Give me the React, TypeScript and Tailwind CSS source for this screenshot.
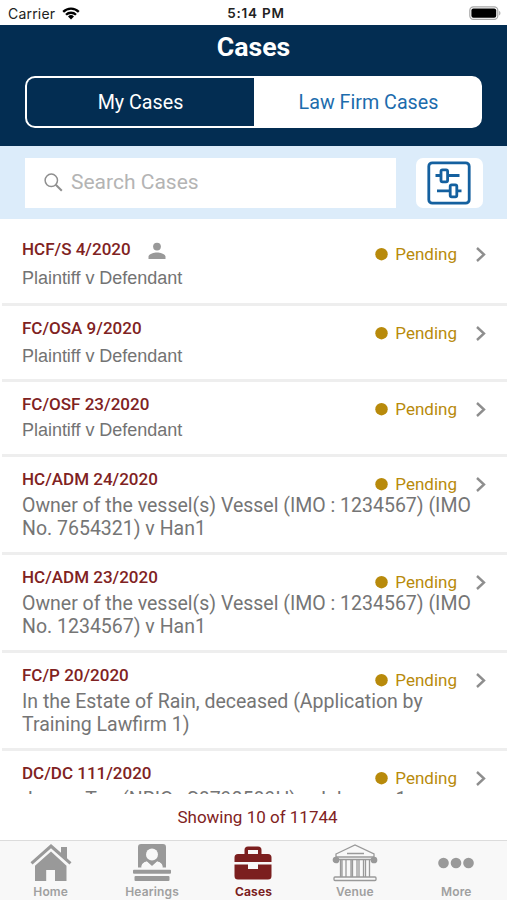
import { useState } from 'react';

type CaseItem = {
  id: string;
  parties: string[];
  status: string;
  own?: boolean;
  row: string;
  partiesClass: string;
};

const COMPACT = "font-['Liberation_Sans',Arial,sans-serif] text-[18px] leading-[24px] tracking-[-0.03px] text-[#737373]";
const REGULAR = 'mt-[3px] w-0 text-[19.5px] leading-[22.7px] text-[#757575]';

const CASES: CaseItem[] = [
  { id: 'HCF/S 4/2020', parties: ['Plaintiff v Defendant'], status: 'Pending', own: true, row: 'h-[87px] pt-[18px]', partiesClass: `mt-[4px] ${COMPACT}` },
  { id: 'FC/OSA 9/2020', parties: ['Plaintiff v Defendant'], status: 'Pending', row: 'h-[76px] pt-[10px]', partiesClass: `mt-[3px] ${COMPACT}` },
  { id: 'FC/OSF 23/2020', parties: ['Plaintiff v Defendant'], status: 'Pending', row: 'h-[75px] pt-[10px]', partiesClass: `mt-[1px] ${COMPACT}` },
  { id: 'HC/ADM 24/2020', parties: ['Owner of the vessel(s) Vessel (IMO : 1234567) (IMO', 'No. 7654321) v Han1'], status: 'Pending', row: 'h-[98px] pt-[10px]', partiesClass: REGULAR },
  { id: 'HC/ADM 23/2020', parties: ['Owner of the vessel(s) Vessel (IMO : 1234567) (IMO', 'No. 1234567) v Han1'], status: 'Pending', row: 'h-[98px] pt-[10px]', partiesClass: REGULAR },
  { id: 'FC/P 20/2020', parties: ['In the Estate of Rain, deceased (Application by', 'Training Lawfirm 1)'], status: 'Pending', row: 'h-[98px] pt-[10px]', partiesClass: REGULAR },
  { id: 'DC/DC 111/2020', parties: ['James Tan (NRIC : S8790589H) v Johnson 1'], status: 'Pending', row: 'h-[98px] pt-[10px]', partiesClass: REGULAR },
];

function StatusBar() {
  return (
    <div className="grid h-[25px] shrink-0 grid-cols-3 items-center bg-white pt-[2px] pr-[6px] pl-2 font-['Inter','Liberation_Sans',sans-serif] text-[#222]">
      <div className="flex items-center gap-[7px] text-[14px] tracking-[0.2px]">
        <span>Carrier</span>
        <svg width="18" height="13" viewBox="0 0 18 13" fill="none" stroke="#000" strokeWidth="2.3">
          <path d="M1.2 4.9a11 11 0 0 1 15.6 0" />
          <path d="M4 7.8a7.1 7.1 0 0 1 10 0" />
          <path d="M9 12.4 6 9.5a4.3 4.3 0 0 1 6 0Z" fill="#000" stroke="none" />
        </svg>
      </div>
      <span className="pl-[3px] text-center text-[13.5px] font-semibold tracking-[0.8px] whitespace-nowrap">5:14 PM</span>
      <svg className="justify-self-end" width="32" height="15" viewBox="0 0 32 15">
        <rect x="0.8" y="0.8" width="28" height="12.6" rx="3.6" fill="#fff" stroke="#a8a8a8" strokeWidth="1.2" />
        <rect x="2.4" y="2.4" width="24.8" height="9.4" rx="2" fill="#000" />
        <path d="M30.2 5v4.4c1.6-.6 1.6-3.8 0-4.4Z" fill="#a8a8a8" />
      </svg>
    </div>
  );
}

function FilterIcon() {
  return (
    <svg className="mr-px" width="44" height="44" viewBox="0 0 44 44" fill="none" stroke="#14609f" strokeWidth="2.8">
      <rect x="1.8" y="1.8" width="40.4" height="40.4" rx="3.5" />
      <path d="M8.5 14.5H14M21 14.5h11.5" />
      <rect x="14" y="8.8" width="6.6" height="12" rx="1.5" />
      <path d="M10 29.8h13M30 29.8h4.5" />
      <rect x="23.2" y="23.8" width="6.6" height="12" rx="1.5" />
    </svg>
  );
}

function PersonIcon() {
  return (
    <svg className="mt-[3px]" width="18" height="18" viewBox="0 0 18 18" fill="#999">
      <circle cx="9" cy="4.6" r="3.9" />
      <path d="M.5 17v-2.2C.5 12 5.5 10.5 9 10.5s8.5 1.5 8.5 4.3V17Z" />
    </svg>
  );
}

function CaseRow({ item }: { item: CaseItem }) {
  return (
    <li className={`ml-[2px] flex shrink-0 justify-between border-b-[3.5px] border-[#eee] pl-[20px] ${item.row}`}>
      <div className="whitespace-nowrap">
        <div className="flex h-[25px] items-center gap-[17px]">
          <h2 className="text-[17px] leading-[25px] font-medium text-[#7f2222]">{item.id}</h2>
          {item.own && <PersonIcon />}
        </div>
        <div className={item.partiesClass}>
          {item.parties.map((line) => (
            <p key={line}>{line}</p>
          ))}
        </div>
      </div>
      <div className="mt-[5px] mr-[20px] flex h-[25px] shrink-0 items-center text-[#b88a0b]">
        <svg className="mr-[7px]" width="13" height="13" viewBox="0 0 13 13" fill="#b88a0b">
          <circle cx="6.5" cy="6.2" r="6.2" />
        </svg>
        <span className="text-[17px] leading-[25px]">{item.status}</span>
        <svg className="ml-[18px]" width="12" height="16" viewBox="0 0 12 16" fill="none" stroke="#8e8e8e" strokeWidth="2.4">
          <path d="m2 1 7 6.5L2 14" />
        </svg>
      </div>
    </li>
  );
}

function HomeIcon() {
  return (
    <svg width="42" height="38" viewBox="0 0 42 38" fill="#999">
      <path d="M21 0 .5 18.2l2 2.3L21 4.300l18.500 16.200 2-2.300-4.500-4V3h-6v5.800Z" />
      <path d="M21 7.5 5 21.7V37h11.200V26h8.800v11h11.500V21.700Z" />
    </svg>
  );
}

function HearingsIcon() {
  return (
    <svg width="40" height="38" viewBox="0 0 40 38" fill="#999">
      <path d="M9 0h22a3 3 0 0 1 3 3v20.500h-3.500v-1c0-2.500-2-4-5-5l-5.500 5-5.500-5c-3 1-5 2.500-5 5v1H6V3a3 3 0 0 1 3-3Z" />
      <path d="M9.500 23.500c0-3.500 2-5.500 5.500-6l5 4.500 5-4.500c3.500.5 5.500 2.500 5.500 6Z" fill="#f8f8f8" />
      <circle cx="20" cy="10.5" r="6" fill="#f8f8f8" />
      <rect x="1" y="25.8" width="38" height="4" rx="1" />
      <rect x="2.5" y="32" width="35" height="5" rx="1" />
    </svg>
  );
}

function BriefcaseIcon() {
  return (
    <svg width="38" height="34" viewBox="0 0 38 34" fill="#7b1f1f">
      <path d="M10.5 8V4A3.5 3.5 0 0 1 14 .5h10A3.5 3.5 0 0 1 27.5 4v4H34a3.5 3.5 0 0 1 3.500 3.500V16H.5v-4.500A3.500 3.500 0 0 1 4 8Zm3.500 0h10V4H14Z" />
      <path d="M.5 18.500H14V23h10v-4.500h13.500V30a3.500 3.500 0 0 1-3.500 3.500H4A3.500 3.500 0 0 1 .5 30Z" />
    </svg>
  );
}

function VenueIcon() {
  return (
    <svg width="46" height="38" viewBox="0 0 46 38" fill="none" stroke="#999" strokeWidth="1.3">
      <path d="M4 10 23 1l19 9v3H4ZM15 9.5h17" />
      <circle cx="4" cy="16" r="2.7" fill="#999" />
      <circle cx="42" cy="16" r="2.7" fill="#999" />
      <path d="M6 15.5h34" />
      <path d="M8.500 16v17M10 16v17M14 16v17M19 16v17M20.500 16v17M25 16v17M27 16v17M31.500 16v17M33.500 16v17M37.500 16v17" />
      <rect x="2" y="33" width="42" height="3.5" rx="1" />
    </svg>
  );
}

function MoreIcon() {
  return (
    <svg width="36" height="12" viewBox="0 0 36 12" fill="#999">
      <circle cx="5.5" cy="6" r="5.3" />
      <circle cx="18" cy="6" r="5.3" />
      <circle cx="30.5" cy="6" r="5.3" />
    </svg>
  );
}

const TABS = [
  { label: 'Home', Icon: HomeIcon },
  { label: 'Hearings', Icon: HearingsIcon },
  { label: 'Cases', Icon: BriefcaseIcon },
  { label: 'Venue', Icon: VenueIcon },
  { label: 'More', Icon: MoreIcon },
];

export default function App() {
  const [scope, setScope] = useState('My Cases');

  return (
    <div className="flex h-[900px] w-[507px] flex-col overflow-hidden bg-white font-['Roboto',sans-serif]">
      <StatusBar />

      <header className="flex h-[121px] shrink-0 flex-col bg-[#032d52] px-[25px]">
        <h1 className="mt-[5px] text-center text-[26.7px] leading-[34px] font-bold text-white">Cases</h1>
        <div className="mt-[12px] grid h-[52px] grid-cols-[227px_1fr] overflow-hidden rounded-[10px] border-2 border-white bg-white">
          {['My Cases', 'Law Firm Cases'].map((label) => (
            <button
              key={label}
              onClick={() => setScope(label)}
              className={`pt-px text-[19.7px] ${scope === label ? 'bg-[#032d52] text-white' : 'bg-white pl-[3px] text-[#1c6cad]'}`}
            >
              {label}
            </button>
          ))}
        </div>
      </header>

      <div className="flex h-[73px] shrink-0 items-center justify-between bg-[#dcecfa] pr-[24px] pl-[25px]">
        <div className="flex h-[50px] w-[371px] items-center gap-[8px] bg-white pl-[19px]">
          <svg width="19" height="19" viewBox="0 0 19 19" fill="none" stroke="#8f8f8f" strokeWidth="1.5">
            <circle cx="7.3" cy="7.3" r="6.2" />
            <path d="m11.8 11.8 6 6" strokeWidth="2" />
          </svg>
          <span className="text-[21px] text-[#b4b4b4]">Search Cases</span>
        </div>
        <button className="flex h-[50px] w-[67px] items-center justify-center rounded-[7px] bg-white">
          <FilterIcon />
        </button>
      </div>

      <ul className="flex h-[575px] shrink-0 flex-col overflow-hidden">
        {CASES.map((item) => (
          <CaseRow key={item.id} item={item} />
        ))}
      </ul>

      <p className="h-[46px] shrink-0 pl-[8px] text-center text-[17px] leading-[47px] text-[#7f2222]">Showing 10 of 11744</p>

      <nav className="grid h-[60px] shrink-0 grid-cols-5 border-t border-[#dcdcdc] bg-[#f8f8f8] font-['Inter','Liberation_Sans',sans-serif]">
        {TABS.map(({ label, Icon }) => (
          <div key={label} className="flex flex-col items-center">
            <span className="flex h-[44px] items-center">
              <Icon />
            </span>
            <span className={`text-[12px] leading-[13px] tracking-[0.15px] ${label === 'Cases' ? 'font-bold text-[#7b1f1f]' : 'font-semibold text-[#a0a0a0]'}`}>
              {label}
            </span>
          </div>
        ))}
      </nav>
    </div>
  );
}
